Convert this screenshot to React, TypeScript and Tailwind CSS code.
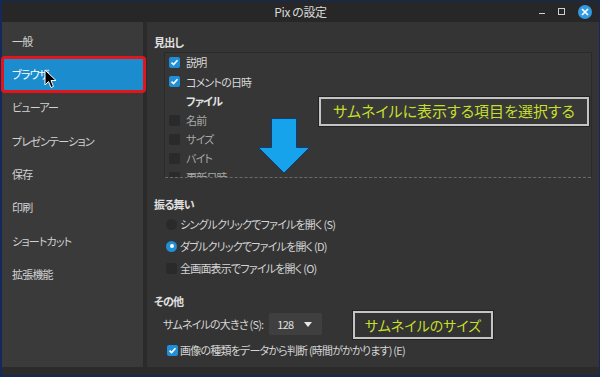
import React from "react";

const sideItems = [
  "一般",
  "ブラウザ",
  "ビューアー",
  "プレゼンテーション",
  "保存",
  "印刷",
  "ショートカット",
  "拡張機能",
];

const Check = ({ on }: { on: boolean }) =>
  on ? (
    <span className="flex h-[11px] w-[11px] shrink-0 items-center justify-center rounded-[2px] bg-[#1f8fd8]">
      <svg width="9" height="9" viewBox="0 0 9 9">
        <path d="M1.5 4.6 L3.6 6.6 L7.5 2.2" fill="none" stroke="#fff" strokeWidth="1.6" />
      </svg>
    </span>
  ) : (
    <span className="h-[11px] w-[11px] shrink-0 rounded-[2px] bg-[#2a2a2a]" />
  );

const Radio = ({ on }: { on: boolean }) =>
  on ? (
    <span className="flex h-[11px] w-[11px] shrink-0 items-center justify-center rounded-full bg-[#1f8fd8]">
      <span className="h-[4px] w-[4px] rounded-full bg-white" />
    </span>
  ) : (
    <span className="h-[11px] w-[11px] shrink-0 rounded-full bg-[#2a2a2a]" />
  );

const listRows: { label: string; kind: "on" | "off" | "head" }[] = [
  { label: "説明", kind: "on" },
  { label: "コメントの日時", kind: "on" },
  { label: "ファイル", kind: "head" },
  { label: "名前", kind: "off" },
  { label: "サイズ", kind: "off" },
  { label: "バイト", kind: "off" },
  { label: "更新日時", kind: "off" },
];

export default function App() {
  return (
    <div className="h-[377px] w-[600px] overflow-hidden bg-[#13295c] pb-[2px] pl-[2px] pr-px pt-px font-['Noto_Sans_CJK_JP','Noto_Sans',sans-serif] text-[11px] tracking-[-0.8px] [font-feature-settings:'palt'_1]">
      <div className="flex h-full flex-col bg-[#2b2b2b]">
        {/* title bar */}
        <div className="flex h-[21px] shrink-0 items-center bg-[#272727]">
          <div className="w-[60px]" />
          <div className="flex-1 text-center text-[12px] tracking-[-0.4px] text-[#d8d8d8]">Pix の設定</div>
          <div className="flex w-[60px] items-center gap-[13px] pr-[3px]">
            <span className="mt-[3px] h-px w-[6px] bg-[#cfcfcf]" />
            <span className="h-[7px] w-[7px] border border-[#cfcfcf]" />
            <span className="flex h-[14px] w-[14px] items-center justify-center rounded-full bg-[#2f9be5]">
              <svg width="8" height="8" viewBox="0 0 8 8">
                <path d="M1 1 L7 7 M7 1 L1 7" stroke="#fff" strokeWidth="1.7" />
              </svg>
            </span>
          </div>
        </div>

        {/* body */}
        <div className="flex flex-1 gap-[4px] pb-[8px]">
          {/* sidebar */}
          <div className="relative w-[141px] shrink-0 bg-[#3a3a3a] pt-[2.5px]">
            {sideItems.map((s, i) => (
              <div
                key={s}
                className={
                  i === 1
                    ? "relative flex h-[33.3px] items-center bg-[#1b8dcf] pl-[10px] text-white"
                    : "flex h-[33.3px] items-center pl-[10px] text-[#d2d2d2]"
                }
              >
                {s}
                {i === 1 && (
                  <>
                    <span className="pointer-events-none absolute -bottom-[2px] -left-[1px] -right-[3px] -top-[2px] rounded-[4px] border-[3px] border-[#e3151a]" />
                    <svg
                      className="absolute left-[42px] top-[11px]"
                      width="14"
                      height="20"
                      viewBox="0 0 14 20"
                    >
                      <path
                        d="M1 1 L1 16 L4.5 12.5 L7 18.5 L9.5 17.5 L7 11.5 L12 11.5 Z"
                        fill="#000"
                        stroke="#fff"
                        strokeWidth="1"
                      />
                    </svg>
                  </>
                )}
              </div>
            ))}
          </div>

          {/* content */}
          <div className="relative flex-1 bg-[#343434] pl-[7px] text-[#d4d4d4]">
            <div className="mt-[12px] flex h-[16px] items-center font-bold text-[#e0e0e0]">見出し</div>

            <div className="ml-[10px] mr-[7px] mt-[2px] h-[126px] overflow-hidden border border-b-0 border-[#2a2a2a] bg-[#363636]">
              <div className="h-[125px] overflow-hidden border-b border-dashed border-[#6a6a6a]">
                {listRows.map((r) => (
                  <div key={r.label} className="flex h-[19.2px] items-center gap-[6px] pl-[4px]">
                    {r.kind === "head" ? (
                      <span className="pl-[17px] font-bold text-[#e2e2e2]">{r.label}</span>
                    ) : (
                      <>
                        <Check on={r.kind === "on"} />
                        <span className={r.kind === "on" ? "text-[#d8d8d8]" : "text-[#a8a8a8]"}>{r.label}</span>
                      </>
                    )}
                  </div>
                ))}
              </div>
            </div>

            <div className="mt-[18px] flex h-[16px] items-center font-bold text-[#e0e0e0]">振る舞い</div>
            <div className="mt-[1px]">
              <div className="flex h-[22px] items-center gap-[3px] pl-[12px]">
                <Radio on={false} />
                <span>シングルクリックでファイルを開く (S)</span>
              </div>
              <div className="flex h-[22px] items-center gap-[3px] pl-[12px]">
                <Radio on={true} />
                <span>ダブルクリックでファイルを開く (D)</span>
              </div>
              <div className="flex h-[22px] items-center gap-[3px] pl-[12px]">
                <Check on={false} />
                <span>全画面表示でファイルを開く (O)</span>
              </div>
            </div>

            <div className="mt-[14px] flex h-[16px] items-center font-bold text-[#e0e0e0]">その他</div>
            <div className="mt-[4px] flex h-[22px] items-center gap-[6px] pl-[9px]">
              <span>サムネイルの大きさ (S):</span>
              <div className="flex h-[22px] w-[53px] items-center justify-between rounded-[2px] bg-[#3f3f3f] pl-[8px] pr-[10px] text-[#e0e0e0]">
                <span>128</span>
                <svg width="8" height="5" viewBox="0 0 8 5">
                  <path d="M0 0 L8 0 L4 5 Z" fill="#e8e8e8" />
                </svg>
              </div>
            </div>
            <div className="mt-[5px] flex h-[20px] items-center gap-[2px] pl-[13px]">
              <Check on={true} />
              <span>画像の種類をデータから判断 (時間がかかります) (E)</span>
            </div>

            {/* annotations */}
            <svg className="absolute left-[111px] top-[96px]" width="52" height="56" viewBox="0 0 52 56">
              <path
                d="M13.5 0.5 L38.5 0.5 L38.5 29.5 L51.5 29.5 L26 55 L0.5 29.5 L13.5 29.5 Z"
                fill="#17a3ec"
                stroke="#0d3f7a"
                strokeWidth="1"
              />
            </svg>
            <div className="absolute left-[172px] top-[75px] flex h-[29px] w-[270px] items-center justify-center border-2 border-[#c4c4c4] bg-[#383838] text-[15px] tracking-normal text-[#c6df2c] outline outline-1 outline-[#222]">
              サムネイルに表示する項目を選択する
            </div>
            <div className="absolute left-[206px] top-[289px] flex h-[28px] w-[140px] items-center justify-center border-2 border-[#c4c4c4] bg-[#333333] text-[14px] tracking-normal text-[#c6df2c] outline outline-1 outline-[#222]">
              サムネイルのサイズ
            </div>
          </div>
        </div>
      </div>
    </div>
  );
}
